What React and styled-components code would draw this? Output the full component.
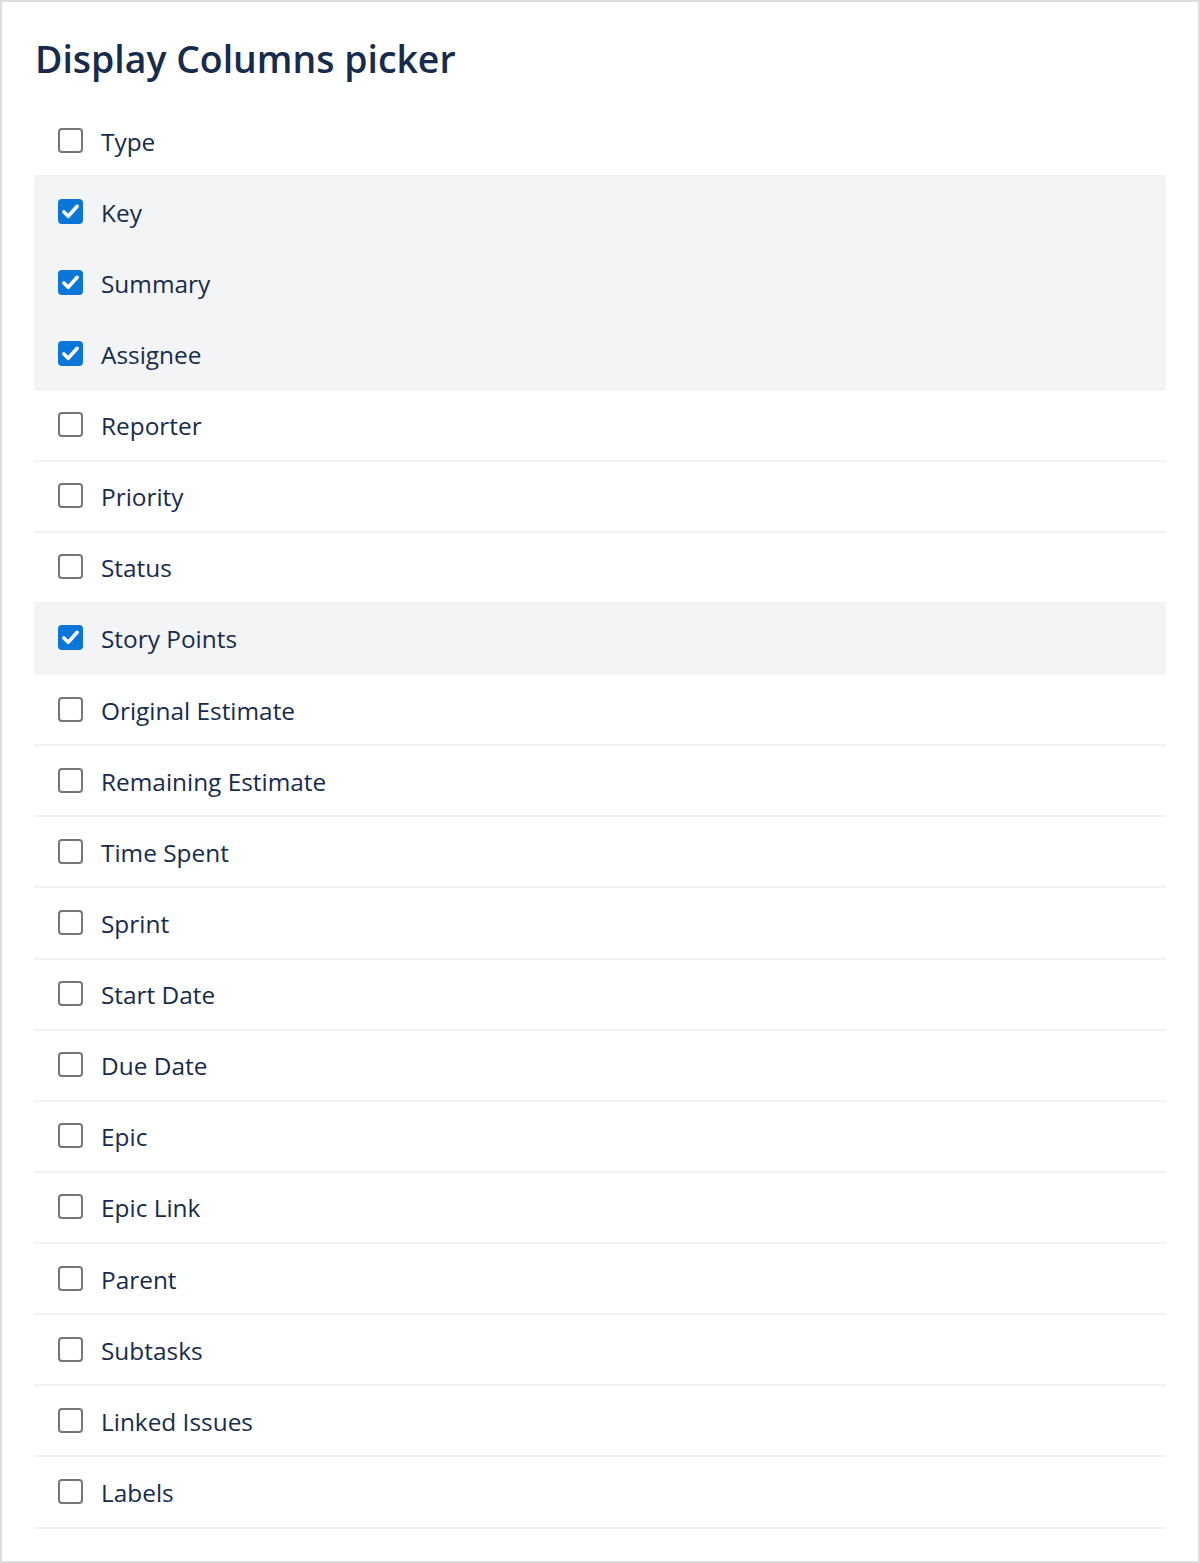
import React from "react";
import styled, { createGlobalStyle } from "styled-components";

const GlobalStyle = createGlobalStyle`
  html, body {
    margin: 0;
    padding: 0;
    background: #ffffff;
  }
  * { box-sizing: border-box; }
`;

const Panel = styled.section`
  width: 1200px;
  min-height: 1563px;
  border: 2px solid #dcdcdc;
  padding: 32px 32px 32px;
  background: #ffffff;
  font-family: "Open Sans", "Noto Sans", "Liberation Sans", sans-serif;
  color: #172b4d;
`;

const Title = styled.h1`
  margin: 0 0 0 1px;
  height: 72px;
  font-size: 37.4px;
  line-height: 50px;
  font-weight: 600;
  color: #172b4d;
`;

const List = styled.ul`
  list-style: none;
  margin: 0;
  padding: 0;
  display: flex;
  flex-direction: column;
`;

const Row = styled.li`
  display: flex;
  align-items: center;
  gap: 18px;
  height: 71.13px;
  padding: 0 24px;
  background: ${(p) => (p.$checked ? "#f3f4f6" : "transparent")};
  border-bottom: 2px solid ${(p) => (p.$checked ? "#f3f4f6" : "#f1f2f4")};
  cursor: pointer;
`;

const Box = styled.span`
  flex: none;
  width: 25px;
  height: 25px;
  margin-top: -1px;
  border-radius: 4px;
  display: inline-flex;
  align-items: center;
  justify-content: center;
  background: ${(p) => (p.$checked ? "#0b75d8" : "#ffffff")};
  border: 2px solid ${(p) => (p.$checked ? "#0b75d8" : "#767676")};
`;

const Label = styled.span`
  font-size: 24.4px;
  line-height: 33px;
  margin-top: 1px;
  color: #172b4d;
`;

const Check = () => (
  <svg width="19" height="19" viewBox="0 0 16 16" aria-hidden="true">
    <path
      d="M2.4 8.4 L6.1 12 L13.6 3.6"
      fill="none"
      stroke="#ffffff"
      strokeWidth="3"
      strokeLinecap="round"
      strokeLinejoin="round"
    />
  </svg>
);

const columns = [
  ["Type", false],
  ["Key", true],
  ["Summary", true],
  ["Assignee", true],
  ["Reporter", false],
  ["Priority", false],
  ["Status", false],
  ["Story Points", true],
  ["Original Estimate", false],
  ["Remaining Estimate", false],
  ["Time Spent", false],
  ["Sprint", false],
  ["Start Date", false],
  ["Due Date", false],
  ["Epic", false],
  ["Epic Link", false],
  ["Parent", false],
  ["Subtasks", false],
  ["Linked Issues", false],
  ["Labels", false],
];

export default function App() {
  const [state, setState] = React.useState(columns);
  const toggle = (i) =>
    setState((s) => s.map((c, j) => (j === i ? [c[0], !c[1]] : c)));
  return (
    <>
      <GlobalStyle />
      <Panel>
        <Title>Display Columns picker</Title>
        <List>
          {state.map(([name, checked], i) => (
            <Row key={name} $checked={checked} onClick={() => toggle(i)}>
              <Box $checked={checked}>{checked && <Check />}</Box>
              <Label>{name}</Label>
            </Row>
          ))}
        </List>
      </Panel>
    </>
  );
}
